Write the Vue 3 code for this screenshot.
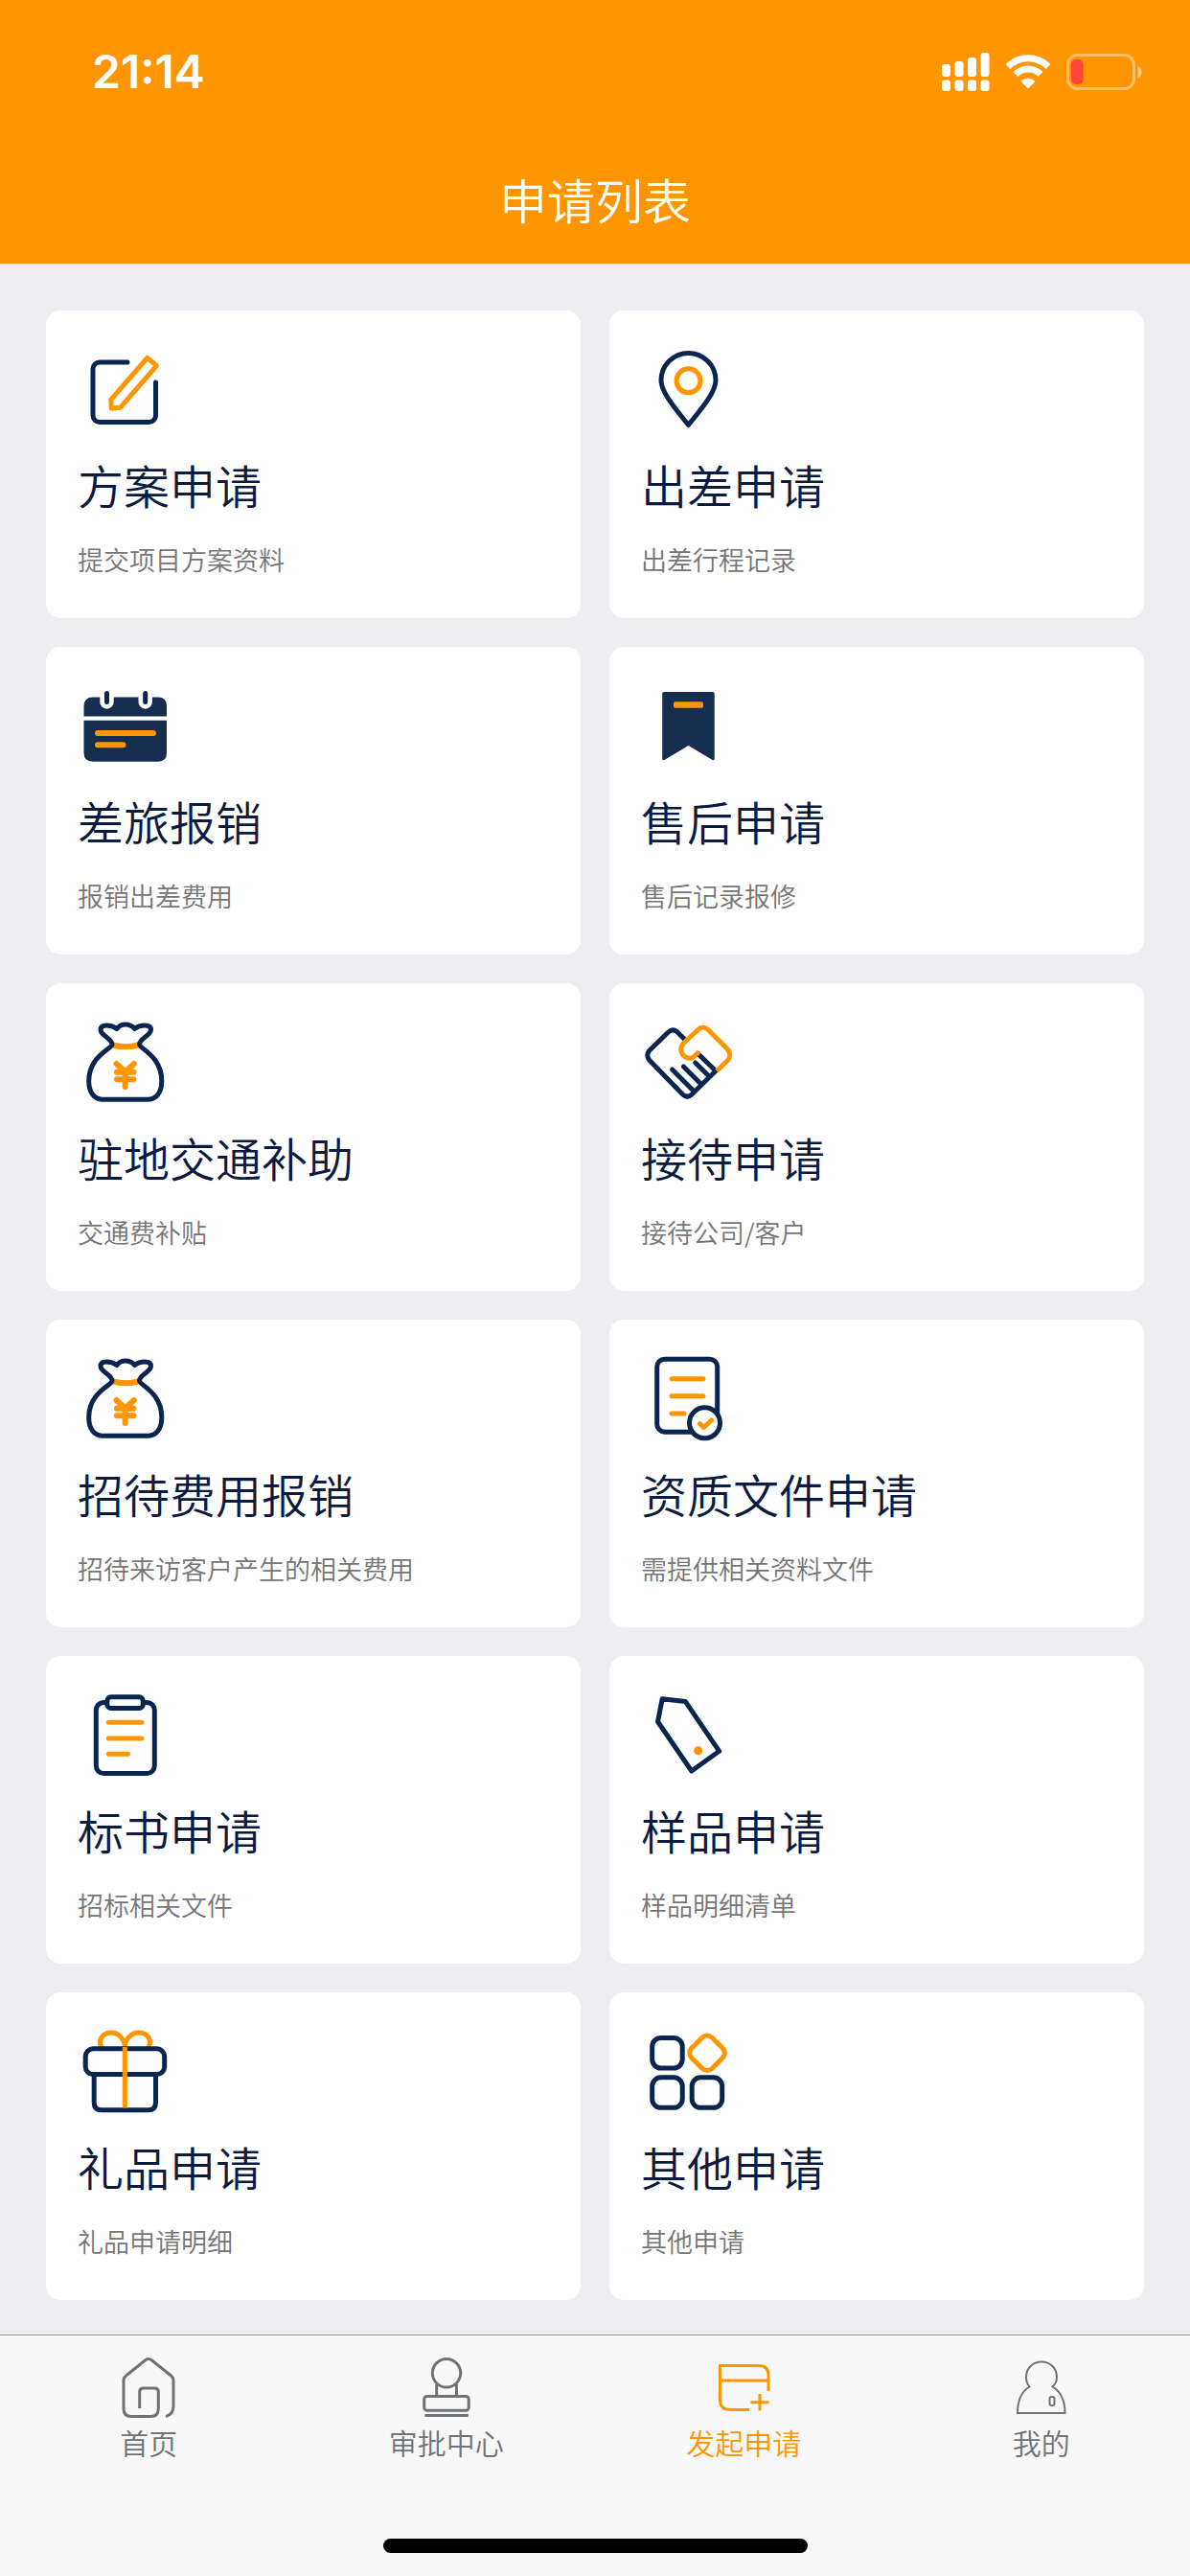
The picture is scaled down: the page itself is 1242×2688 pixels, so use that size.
<script setup>
const cards = [
  { icon: 'edit', title: '方案申请', desc: '提交项目方案资料' },
  { icon: 'pin', title: '出差申请', desc: '出差行程记录' },
  { icon: 'calendar', title: '差旅报销', desc: '报销出差费用' },
  { icon: 'bookmark', title: '售后申请', desc: '售后记录报修' },
  { icon: 'bag', title: '驻地交通补助', desc: '交通费补贴' },
  { icon: 'handshake', title: '接待申请', desc: '接待公司/客户' },
  { icon: 'bag', title: '招待费用报销', desc: '招待来访客户产生的相关费用' },
  { icon: 'document', title: '资质文件申请', desc: '需提供相关资料文件' },
  { icon: 'clipboard', title: '标书申请', desc: '招标相关文件' },
  { icon: 'tag', title: '样品申请', desc: '样品明细清单' },
  { icon: 'gift', title: '礼品申请', desc: '礼品申请明细' },
  { icon: 'apps', title: '其他申请', desc: '其他申请' },
]

const tabs = [
  { icon: 'home', label: '首页' },
  { icon: 'stamp', label: '审批中心' },
  { icon: 'create', label: '发起申请', active: true },
  { icon: 'person', label: '我的' },
]
</script>

<template>
  <div class="page">
    <header class="header">
      <div class="status">
        <time class="clock">21:14</time>
        <div class="indicators">
          <svg width="50" height="40" viewBox="0 0 50 40" fill="#fff" aria-hidden="true">
            <rect x="0" y="12" width="9" height="13" rx="3" />
            <rect x="13.5" y="9" width="9" height="16" rx="3" />
            <rect x="27" y="5" width="9" height="20" rx="3" />
            <rect x="40.5" y="0" width="9" height="25" rx="3" />
            <rect x="0" y="28.5" width="9" height="11.5" rx="3" />
            <rect x="13.5" y="28.5" width="9" height="11.5" rx="3" />
            <rect x="27" y="28.5" width="9" height="11.5" rx="3" />
            <rect x="40.5" y="28.5" width="9" height="11.5" rx="3" />
          </svg>
          <svg width="48" height="36" viewBox="0 0 48 36" aria-hidden="true">
            <g fill="none" stroke="#fff" stroke-width="7">
              <path d="M3 12.5 A29.5 29.5 0 0 1 45 12.5" />
              <path d="M11 20.5 A18 18 0 0 1 37 20.5" />
            </g>
            <path d="M24 35.5 L16.5 28 A10.5 10.5 0 0 1 31.5 28 Z" fill="#fff" />
          </svg>
          <svg width="80" height="38" viewBox="0 0 80 38" aria-hidden="true">
            <rect x="1.5" y="1.5" width="69" height="35" rx="10" fill="none" stroke="#fff" stroke-opacity=".4" stroke-width="3" />
            <path d="M74.5 12.5 C80 15 80 23 74.5 25.5 Z" fill="#fff" fill-opacity=".5" />
            <rect x="5" y="6" width="12.5" height="26" rx="5" fill="#ff453a" />
          </svg>
        </div>
      </div>
      <h1 class="heading">申请列表</h1>
    </header>

    <main class="grid">
      <a v-for="card in cards" :key="card.title" class="card" href="#">
        <svg class="card-icon" viewBox="0 0 99 99" aria-hidden="true">
          <template v-if="card.icon === 'edit'">
            <path class="navy" d="M52 21 H23 a7 7 0 0 0 -7 7 V76.5 a7 7 0 0 0 7 7 H74.5 a7 7 0 0 0 7 -7 V42" />
            <path class="orange" d="M72.7 16.5 L82.5 24.5 L44.5 68.3 L35.3 69.3 L34.8 60 Z" />
          </template>
          <template v-else-if="card.icon === 'pin'">
            <path class="navy" d="M49.5 86.5 C38 72 21 53 21 40 A28.5 28.5 0 0 1 78 40 C78 53 61 72 49.5 86.5 Z" />
            <circle class="orange" cx="49.5" cy="40.3" r="12.5" />
          </template>
          <template v-else-if="card.icon === 'calendar'">
            <path class="solid" d="M6.5 39.5 V29 Q6.5 19.5 16 19.5 H23.3 V24.5 a7.2 7.2 0 0 0 14.4 0 V19.5 H63.5 V24.5 a7.2 7.2 0 0 0 14.4 0 V19.5 H84 Q93 19.5 93 29 V39.5 Z" />
            <path class="solid" d="M6.5 43.7 H93 V77.5 Q93 86.7 84 86.7 H16 Q6.5 86.7 6.5 77.5 Z" />
            <path class="navy" d="M30.5 15.5 V24.5 M70.7 15.5 V24.5" />
            <path class="orange thick" d="M21 57 H79 M21 69.3 H47.5" />
          </template>
          <template v-else-if="card.icon === 'bookmark'">
            <path class="solid" d="M24 14 H75 Q76.7 14 76.7 16 V83.5 Q76.7 86 74.5 85 L49.5 70 L24.5 85 Q22.2 86 22.2 83.5 V16 Q22.2 14 24 14 Z" />
            <rect x="34" y="24.3" width="31" height="6.5" rx="2" fill="#ff9500" />
          </template>
          <template v-else-if="card.icon === 'bag'">
            <path class="orange thick" d="M37 31.5 Q50 35 63 31.5" />
            <path class="navy" d="M36 31 C36 24 24 22 24 15.5 C24 9 35 10 41 14.5 C45 8.5 55 8.5 59.5 14.5 C65 10 76.5 9 76.5 15.5 C76.5 22 64.5 24 64.5 31 C64.5 35 87.8 43 87.8 69 C87.8 81 82 88.2 74 88.2 H25.5 C17.5 88.2 11.7 81 11.7 69 C11.7 43 36 35 36 31 Z" />
            <path class="orange thick" d="M40.5 51 L49.7 59.5 L58.8 51 M49.7 59.5 V75 M41 59.7 H58.5 M41 67.3 H58.5" />
          </template>
          <template v-else-if="card.icon === 'handshake'">
            <path class="navy" d="M46 26 L37.5 17.5 Q33 14 28.5 18 L8.5 37.5 Q5 42 8.5 47 L43.5 83 Q48.3 87.5 53 83 L78 58.5 L59.5 40.5 M32.6 57 L55 79.5 M44.4 54 L63 72.5 M56.7 50 L71 64" />
            <path class="orange butt" d="M60.5 38.5 L55.5 43.5 C52 46.5 47 45.5 44 42 C41 38 41 33 44.5 29.5 L59.5 15.5 C62.5 12.5 67 12.5 70 15.5 L90.5 36 C93.5 39.5 93.5 44 90.5 47.5 L79 58.5" />
          </template>
          <template v-else-if="card.icon === 'document'">
            <rect class="navy" x="16.7" y="8.2" width="63" height="76" rx="8" />
            <path class="orange" d="M32 28.7 H65 M32 46.7 H65 M32 65 H45" />
            <circle class="navy paper" cx="66.5" cy="74.8" r="16" />
            <path class="orange" d="M61.3 75.7 L65.5 79.5 L73.5 72" />
          </template>
          <template v-else-if="card.icon === 'clipboard'">
            <rect class="navy" x="19.3" y="15.5" width="61" height="74" rx="8" />
            <rect class="navy paper" x="30.8" y="9.8" width="37.5" height="11.7" rx="4" />
            <path class="orange" d="M32.3 36.3 H67 M32.3 53 H67 M32.3 69.3 H52.5" />
          </template>
          <template v-else-if="card.icon === 'tag'">
            <path class="navy" d="M22.2 11.7 L46.3 14.5 L81.7 66.3 L52.8 87 L17.5 35.5 Z" />
            <circle cx="59.7" cy="65.7" r="4.5" fill="#ff9500" />
          </template>
          <template v-else-if="card.icon === 'gift'">
            <path class="orange butt" d="M25.5 25 C20 16 27 9 35 9 C43 9 49.3 16 49.3 25 C49.3 16 56 9 64 9 C72 9 79 16 73.5 25" />
            <rect class="navy" x="8.2" y="25.8" width="82.5" height="26.7" rx="8" />
            <path class="navy" d="M17.2 52.5 V82 Q17.2 89.8 25 89.8 H73.5 Q81.5 89.8 81.5 82 V52.5" />
            <path class="orange butt" d="M49.3 24 V87.5" />
          </template>
          <template v-else>
            <rect class="navy" x="11.7" y="14.5" width="31.5" height="31.5" rx="9" />
            <rect class="navy" x="11.7" y="55.8" width="31.5" height="31.5" rx="9" />
            <rect class="navy" x="53.2" y="55.8" width="31.5" height="31.5" rx="9" />
            <rect class="orange" x="54" y="15.2" width="30" height="30" rx="7" transform="rotate(45 69 30.2)" />
          </template>
        </svg>
        <h2 class="card-title">{{ card.title }}</h2>
        <p class="card-desc">{{ card.desc }}</p>
      </a>
    </main>

    <footer class="footer">
      <nav class="tabs">
        <a v-for="tab in tabs" :key="tab.label" class="tab" :class="{ active: tab.active }" href="#">
          <svg class="tab-icon" viewBox="0 0 66 66" aria-hidden="true">
            <path v-if="tab.icon === 'home'" d="M51 62.5 Q59 60.5 59 52 V25 Q59 22 56.5 20 L36 3.5 Q33 1.5 30 3.5 L9.5 20 Q7 22 7 25 V54.5 Q7 62.5 15 62.5 H35.5 Q43.3 62.5 43.3 54.5 V37 Q43.3 33 39.5 33 H27.5 Q23.7 33 23.7 37 V54" />
            <template v-else-if="tab.icon === 'stamp'">
              <circle cx="33" cy="17.3" r="14.7" />
              <rect x="9.7" y="41.5" width="46.5" height="14.7" rx="3" />
              <path d="M22.7 29 V41 M43.5 29 V41 M10.5 61.5 H55.8" />
            </template>
            <path v-else-if="tab.icon === 'create'" d="M39 55.5 H19 Q8.5 55.5 8.5 45 V9.5 H49 Q59 9.5 59 19.5 V36 M8.5 25 H59 M50 39 V56.5 M40.5 47.7 H59.5" />
            <template v-else>
              <path class="fine" d="M20.5 31.5 C17.5 28 17 25 17 21.5 C17 12 24 5.5 33 5.5 C42 5.5 49 12 49 21.5 C49 25 48.5 28 44.5 31.5 C52 36 57.5 45 57.5 59 H8 C8 45 13 36 20.5 31.5 Z" />
              <rect class="fine" x="41.5" y="42" width="5" height="9" rx="2" />
            </template>
          </svg>
          <span class="tab-label">{{ tab.label }}</span>
        </a>
      </nav>
      <div class="home-indicator"></div>
    </footer>
  </div>
</template>

<style>
body {
  margin: 0;
  background: #eeedf2;
}
</style>

<style scoped>
.page {
  display: flex;
  flex-direction: column;
  min-height: 100vh;
  background: #eeedf2;
  font-family: "Noto Sans CJK SC", "Noto Sans", sans-serif;
  font-weight: 350;
}

a {
  color: inherit;
  text-decoration: none;
}

.header {
  background: #ff9500;
  color: #fff;
  padding-bottom: 10px;
}

.status {
  display: flex;
  align-items: center;
  justify-content: space-between;
  height: 149px;
  padding: 0 49px 0 96px;
}

.clock {
  font-family: Inter, "Liberation Sans", sans-serif;
  font-size: 48px;
  font-weight: 600;
  line-height: 56px;
}

.indicators {
  display: flex;
  align-items: center;
  gap: 16px;
}

.heading {
  margin: 0;
  font-size: 50px;
  font-weight: inherit;
  line-height: 116px;
  text-align: center;
}

.grid {
  flex: 1;
  display: grid;
  grid-template-columns: 1fr 1fr;
  align-content: start;
  gap: 30px;
  padding: 49px 48px 36px;
}

.card {
  display: flex;
  flex-direction: column;
  align-items: flex-start;
  padding: 33px 33px 41px;
  border-radius: 15px;
  background: #fff;
}

.card-icon {
  width: 99px;
  height: 99px;
}

.card-title {
  margin: 13px 0 23px;
  color: #0b1a40;
  font-size: 48px;
  font-weight: inherit;
  line-height: 72px;
}

.card-desc {
  margin: 0;
  color: #757575;
  font-size: 27px;
  line-height: 40px;
}

.navy,
.orange {
  fill: none;
  stroke: #0a2650;
  stroke-width: 5;
  stroke-linecap: round;
  stroke-linejoin: round;
}

.orange {
  stroke: #ff9500;
}

.thick {
  stroke-width: 6;
}

.butt {
  stroke-linecap: butt;
}

.paper {
  fill: #fff;
}

.solid {
  fill: #152d4f;
}

.footer {
  display: flex;
  flex-direction: column;
  align-items: center;
  gap: 81px;
  padding: 22px 0 24px;
  border-top: 1px solid #95959b;
  background: #f8f8f8;
}

.tabs {
  display: flex;
  width: 100%;
}

.tab {
  flex: 1;
  display: flex;
  flex-direction: column;
  align-items: center;
  gap: 3px;
  color: #6e7377;
}

.tab.active {
  color: #ff9500;
}

.tab-icon {
  width: 66px;
  height: 66px;
  fill: none;
  stroke: currentColor;
  stroke-width: 3;
}

.fine {
  stroke-width: 2;
}

.tab-label {
  font-size: 30px;
  line-height: 40px;
}

.home-indicator {
  width: 443px;
  height: 15px;
  border-radius: 8px;
  background: #000;
}
</style>
